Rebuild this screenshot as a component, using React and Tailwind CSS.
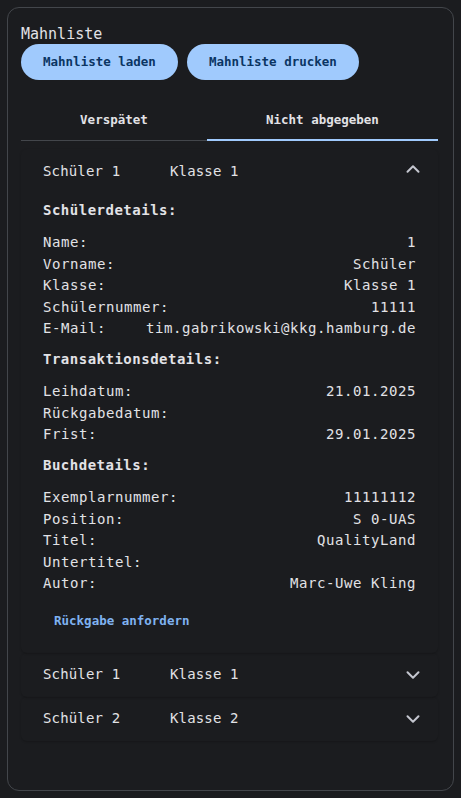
import { ChevronDown, ChevronUp } from "lucide-react";

const schuelerDetails = [
  ["Name:", "1"],
  ["Vorname:", "Schüler"],
  ["Klasse:", "Klasse 1"],
  ["Schülernummer:", "11111"],
  ["E-Mail:", "tim.gabrikowski@kkg.hamburg.de"],
];

const transaktionsDetails = [
  ["Leihdatum:", "21.01.2025"],
  ["Rückgabedatum:", ""],
  ["Frist:", "29.01.2025"],
];

const buchDetails = [
  ["Exemplarnummer:", "11111112"],
  ["Position:", "S 0-UAS"],
  ["Titel:", "QualityLand"],
  ["Untertitel:", ""],
  ["Autor:", "Marc-Uwe Kling"],
];

function DetailGroup({ title, rows, first }) {
  return (
    <div className={first ? "" : "mt-[9px]"}>
      <h3 className="mb-[11px] text-[14px] font-bold leading-[21.5px] tracking-[0.5px]">{title}</h3>
      {rows.map(([label, value]) => (
        <div key={label} className="flex justify-between text-[14px] leading-[21.5px] tracking-[0.57px]">
          <span>{label}</span>
          <span>{value}</span>
        </div>
      ))}
    </div>
  );
}

function PanelHeader({ name, klasse, open }) {
  const Icon = open ? ChevronUp : ChevronDown;
  return (
    <div className="flex h-[44px] items-center px-[22px]">
      <span className="w-[127px] text-[14px] tracking-[0.15px]">{name}</span>
      <span className="flex-1 text-[14px] tracking-[0.15px]">{klasse}</span>
      <Icon
        className={`-mr-[8px] h-[22px] w-[22px] text-[#c4c6cf] ${open ? "-mt-[4px]" : ""}`}
        strokeWidth={2.2}
      />
    </div>
  );
}

export default function App() {
  return (
    <div className="min-h-[798px] bg-[#1b1c1f] pt-[7px] font-['DejaVu_Sans_Mono',monospace] text-[#e2e2e6]">
      <div className="mx-[7px] rounded-xl border border-[#43464b] pb-[49px] pl-[13px] pr-[15px] pt-[16px]">
        <h1 className="text-[15px] leading-5">Mahnliste</h1>
        <div className="flex gap-[9px]">
          <button className="h-9 rounded-full bg-[#a0cafd] px-[22px] text-[12.5px] font-bold text-[#0b3563]">
            Mahnliste laden
          </button>
          <button className="h-9 rounded-full bg-[#a0cafd] px-[22px] text-[12.5px] font-bold text-[#0b3563]">
            Mahnliste drucken
          </button>
        </div>

        <div className="mt-[19px] flex border-b border-[#43464b]">
          <div className="-mb-px flex h-[42px] flex-auto items-center justify-center border-b-2 border-transparent pt-[2px] text-[12.5px] font-bold">
            Verspätet
          </div>
          <div className="-mb-px flex h-[42px] flex-auto items-center justify-center border-b-2 border-[#a0cafd] pt-[2px] text-[12.5px] font-bold">
            Nicht abgegeben
          </div>
        </div>

        <div className="mt-[8px] flex flex-col">
          <div className="rounded-md shadow-[0_1px_2px_rgba(0,0,0,0.2)]">
            <PanelHeader name="Schüler 1" klasse="Klasse 1" open />
            <div className="px-[22px] pb-[13.5px] pt-[6.75px]">
              <DetailGroup title="Schülerdetails:" rows={schuelerDetails} first />
              <DetailGroup title="Transaktionsdetails:" rows={transaktionsDetails} />
              <DetailGroup title="Buchdetails:" rows={buchDetails} />
              <button className="mt-[8.5px] h-9 px-[11px] text-[12.5px] font-bold text-[#7fb2f0]">
                Rückgabe anfordern
              </button>
            </div>
          </div>
          <div className="rounded-md shadow-[0_1px_2px_rgba(0,0,0,0.2)]">
            <PanelHeader name="Schüler 1" klasse="Klasse 1" />
          </div>
          <div className="rounded-md shadow-[0_1px_2px_rgba(0,0,0,0.2)]">
            <PanelHeader name="Schüler 2" klasse="Klasse 2" />
          </div>
        </div>
      </div>
    </div>
  );
}
